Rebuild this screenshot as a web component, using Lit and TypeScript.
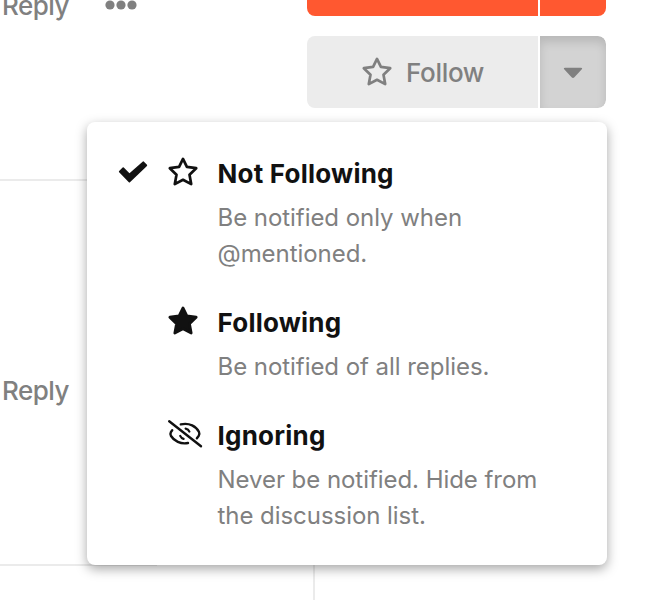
import { LitElement, html, css, svg, nothing } from "lit";
import { customElement, property } from "lit/decorators.js";

type IconName = "star" | "star-solid" | "check" | "eye-off" | "caret" | "dots";

const STAR = "M15 1.9 18.9 9.9 28.2 11.2 21.5 17.8 23.2 27.1 15 22.8 6.8 27.1 8.5 17.8 1.8 11.2 11.1 9.9Z";

const ICONS: Record<IconName, { w: number; h: number; body: unknown }> = {
  star: {
    w: 30,
    h: 30,
    body: svg`<path d=${STAR} fill="none" stroke="currentColor" stroke-width="2.7" stroke-linejoin="round"/>`,
  },
  "star-solid": {
    w: 30,
    h: 30,
    body: svg`<path d=${STAR} fill="currentColor" stroke="currentColor" stroke-width="2.7" stroke-linejoin="round"/>`,
  },
  check: {
    w: 30,
    h: 24,
    body: svg`<path d="M.7 11.6 4.2 8.1 10.4 14.4 24.4 2.2 27.4 5.3 10.4 21.6Z" fill="currentColor" stroke="currentColor" stroke-width="1.6" stroke-linejoin="round"/>`,
  },
  "eye-off": {
    w: 36,
    h: 30,
    body: svg`<g fill="none" stroke="currentColor" stroke-width="2.4" stroke-linecap="round">
      <path d="M2.2 2.2 34 27.3"/>
      <path d="M13.8 5.4C22.5 3.4 29.2 7.5 31.9 12.8Q33 15 31.6 17L29.9 19.2"/>
      <path d="M5.2 11.3 3.9 13.1Q2.9 14.9 4 17C7 21.9 13.5 25.5 21 24"/>
      <path d="M18.6 9.6Q21.4 10.2 22.4 12.6" stroke-width="2.2"/>
      <path d="M13.2 16.9Q14.2 19.2 16.6 19.9" stroke-width="2.2"/>
    </g>`,
  },
  caret: {
    w: 20,
    h: 12,
    body: svg`<path d="M2 .8H18Q20 1 18.6 2.5L11.4 10.2Q10 11.8 8.6 10.2L1.4 2.5Q0 1 2 .8Z" fill="currentColor"/>`,
  },
  dots: {
    w: 32,
    h: 10,
    body: svg`<g fill="currentColor"><circle cx="5" cy="5" r="4.6"/><circle cx="16" cy="5" r="4.6"/><circle cx="27" cy="5" r="4.6"/></g>`,
  },
};

@customElement("ui-icon")
export class UiIcon extends LitElement {
  static styles = css`
    :host { display: block; flex: none; line-height: 0; }
    svg { display: block; overflow: visible; }
  `;
  @property() name: IconName = "star";
  render() {
    const { w, h, body } = ICONS[this.name];
    return html`<svg width=${w} height=${h} viewBox="0 0 ${w} ${h}" aria-hidden="true">${body}</svg>`;
  }
}

interface Option {
  icon: IconName;
  label: string;
  hint: string;
  checked?: boolean;
}

const OPTIONS: Option[] = [
  { icon: "star", label: "Not Following", hint: "Be notified only when @mentioned.", checked: true },
  { icon: "star-solid", label: "Following", hint: "Be notified of all replies." },
  { icon: "eye-off", label: "Ignoring", hint: "Never be notified. Hide from the discussion list." },
];

@customElement("subscription-menu")
export class SubscriptionMenu extends LitElement {
  static styles = css`
    :host {
      display: block;
      box-sizing: border-box;
      width: 520px;
      height: 443px;
      padding: 34px 32px 0;
      border-radius: 8px;
      background: #fff;
      color: #111;
      box-shadow: 0 4px 12px rgba(0, 0, 0, 0.35);
    }
    .option {
      display: grid;
      grid-template-columns: 49px 49.5px 1fr;
      margin-bottom: 41px;
    }
    .mark { padding-top: 4px; }
    .icon { padding-top: 1px; }
    .eye-off { margin-left: -1.5px; }
    .label { font-size: 26px; font-weight: 700; line-height: 36px; letter-spacing: 0.22px; white-space: nowrap; }
    .hint { margin-top: 8px; font-size: 24px; line-height: 36px; letter-spacing: -0.05px; color: #808080; width: 340px; }
    .text { margin-bottom: -8px; }
  `;
  render() {
    return OPTIONS.map(
      (o) => html`<div class="option">
        <div class="mark">${o.checked ? html`<ui-icon name="check"></ui-icon>` : nothing}</div>
        <div class="icon ${o.icon}"><ui-icon name=${o.icon}></ui-icon></div>
        <div class="text">
          <div class="label">${o.label}</div>
          <div class="hint">${o.hint}</div>
        </div>
      </div>`
    );
  }
}

@customElement("app-root")
export class AppRoot extends LitElement {
  static styles = css`
    :host {
      display: flex;
      position: relative;
      box-sizing: border-box;
      width: 668px;
      height: 610px;
      overflow: hidden;
      background: #fff;
      color: #808080;
      font-family: Inter, "Liberation Sans", sans-serif;
      font-size: 26px;
    }
    .stream { width: 307px; height: 610px; display: flex; flex-direction: column; }
    .post { box-sizing: border-box; width: 157px; border-bottom: 2px solid #ebebeb; display: flex; flex-direction: column; }
    .first { height: 181px; }
    .second { height: 385px; justify-content: flex-end; padding-bottom: 155px; }
    .actions { display: flex; align-items: center; gap: 36px; height: 36px; padding-left: 2px; }
    .first .actions { margin-top: -12px; }
    .reply { line-height: 36px; letter-spacing: -0.5px; white-space: nowrap; }
    .reply, .follow { font-weight: 450; }
    .actions ui-icon { margin-top: -2px; }
    .side { display: flex; flex-direction: column; width: 299px; }
    .split { display: flex; gap: 2px; border-radius: 8px; overflow: hidden; flex: none; }
    .primary { height: 72px; margin-top: -56px; }
    .primary .main, .primary .more { background: #ff5830; }
    .main { box-sizing: border-box; width: 231px; padding-left: 1px; display: flex; align-items: center; justify-content: center; gap: 14px; background: #ececec; letter-spacing: -0.3px; }
    .more { width: 66px; display: flex; align-items: center; justify-content: center; background: #d3d3d3; }
    .more ui-icon { padding-top: 2px; }
    .follow { height: 72px; margin-top: 20px; }
    .follow .more { border-radius: 0 8px 8px 0; box-shadow: inset 0 6px 10px rgba(0, 0, 0, 0.125); }
    .scrubber { margin: 457px 0 0 6px; width: 2px; height: 35px; background: #ebebeb; }
    subscription-menu { position: absolute; left: 87px; top: 122px; }
  `;
  render() {
    return html`
      <div class="stream">
        <div class="post first">
          <div class="actions"><span class="reply">Reply</span><ui-icon name="dots"></ui-icon></div>
        </div>
        <div class="post second">
          <div class="actions"><span class="reply">Reply</span></div>
        </div>
      </div>
      <div class="side">
        <div class="split primary"><div class="main"></div><div class="more"></div></div>
        <div class="split follow">
          <div class="main"><ui-icon name="star"></ui-icon><span>Follow</span></div>
          <div class="more"><ui-icon name="caret"></ui-icon></div>
        </div>
        <div class="scrubber"></div>
      </div>
      <subscription-menu></subscription-menu>
    `;
  }
}
